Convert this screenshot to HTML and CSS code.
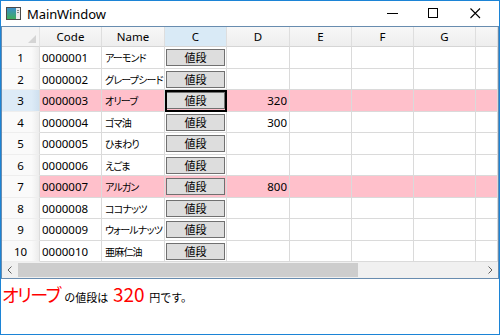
FILE: index.html
```html
<!DOCTYPE html>
<html lang="ja">
<head>
    <meta charset="UTF-8">
    <title>MainWindow</title>
    <link rel="stylesheet" href="styles.css">
</head>
<body>
    <div class="window">
        <div class="titlebar">
            <svg class="app-icon" width="15" height="13" viewBox="0 0 15 13">
                <defs>
                    <linearGradient id="ig" x1="0" y1="0" x2="0" y2="1">
                        <stop offset="0" stop-color="#3b8fc9"/>
                        <stop offset="1" stop-color="#3fae5c"/>
                    </linearGradient>
                </defs>
                <rect x="0" y="0" width="15" height="13" fill="#4a4a4a"/>
                <rect x="1" y="1" width="9" height="11" fill="url(#ig)"/>
                <rect x="10" y="1" width="4" height="11" fill="#ececec"/>
                <rect x="11" y="3" width="2" height="1" fill="#8a8a8a"/>
                <rect x="11" y="5" width="2" height="1" fill="#8a8a8a"/>
            </svg>
            <span class="title">MainWindow</span>
            <div class="controls">
                <svg class="ctl" width="46" height="25" viewBox="0 0 46 25"><rect x="18" y="12" width="11" height="1" fill="#000"/></svg>
                <svg class="ctl" width="38" height="25" viewBox="0 0 38 25"><rect x="13.5" y="7.5" width="9" height="9" fill="none" stroke="#000"/></svg>
                <svg class="ctl" width="46" height="25" viewBox="0 0 46 25"><path d="M17.5 7.5 L27 17 M27 7.5 L17.5 17" stroke="#000" stroke-width="1.1"/></svg>
            </div>
        </div>

        <div class="datagrid">
            <div class="row header">
                <div class="corner"><span class="corner-tri"></span></div>
                <div class="col-head">Code</div>
                <div class="col-head">Name</div>
                <div class="col-head current">C</div>
                <div class="col-head">D</div>
                <div class="col-head">E</div>
                <div class="col-head">F</div>
                <div class="col-head">G</div>
                <div class="col-head filler"></div>
            </div>

            <div class="row tall">
                <div class="row-head">1</div>
                <div class="cell">0000001</div>
                <div class="cell jp">アーモンド</div>
                <div class="cell btn-cell"><button>値段</button></div>
                <div class="cell num"></div>
                <div class="cell"></div><div class="cell"></div><div class="cell"></div><div class="cell"></div>
            </div>
            <div class="row">
                <div class="row-head">2</div>
                <div class="cell">0000002</div>
                <div class="cell jp">グレープシード</div>
                <div class="cell btn-cell"><button>値段</button></div>
                <div class="cell num"></div>
                <div class="cell"></div><div class="cell"></div><div class="cell"></div><div class="cell"></div>
            </div>
            <div class="row tall pink">
                <div class="row-head current">3</div>
                <div class="cell">0000003</div>
                <div class="cell jp">オリーブ</div>
                <div class="cell btn-cell focused"><button>値段</button></div>
                <div class="cell num">320</div>
                <div class="cell"></div><div class="cell"></div><div class="cell"></div><div class="cell"></div>
            </div>
            <div class="row">
                <div class="row-head">4</div>
                <div class="cell">0000004</div>
                <div class="cell jp">ゴマ油</div>
                <div class="cell btn-cell"><button>値段</button></div>
                <div class="cell num">300</div>
                <div class="cell"></div><div class="cell"></div><div class="cell"></div><div class="cell"></div>
            </div>
            <div class="row tall">
                <div class="row-head">5</div>
                <div class="cell">0000005</div>
                <div class="cell jp">ひまわり</div>
                <div class="cell btn-cell"><button>値段</button></div>
                <div class="cell num"></div>
                <div class="cell"></div><div class="cell"></div><div class="cell"></div><div class="cell"></div>
            </div>
            <div class="row">
                <div class="row-head">6</div>
                <div class="cell">0000006</div>
                <div class="cell jp">えごま</div>
                <div class="cell btn-cell"><button>値段</button></div>
                <div class="cell num"></div>
                <div class="cell"></div><div class="cell"></div><div class="cell"></div><div class="cell"></div>
            </div>
            <div class="row tall pink">
                <div class="row-head">7</div>
                <div class="cell">0000007</div>
                <div class="cell jp">アルガン</div>
                <div class="cell btn-cell"><button>値段</button></div>
                <div class="cell num">800</div>
                <div class="cell"></div><div class="cell"></div><div class="cell"></div><div class="cell"></div>
            </div>
            <div class="row">
                <div class="row-head">8</div>
                <div class="cell">0000008</div>
                <div class="cell jp">ココナッツ</div>
                <div class="cell btn-cell"><button>値段</button></div>
                <div class="cell num"></div>
                <div class="cell"></div><div class="cell"></div><div class="cell"></div><div class="cell"></div>
            </div>
            <div class="row tall">
                <div class="row-head">9</div>
                <div class="cell">0000009</div>
                <div class="cell jp">ウォールナッツ</div>
                <div class="cell btn-cell"><button>値段</button></div>
                <div class="cell num"></div>
                <div class="cell"></div><div class="cell"></div><div class="cell"></div><div class="cell"></div>
            </div>
            <div class="row">
                <div class="row-head">10</div>
                <div class="cell">0000010</div>
                <div class="cell jp">亜麻仁油</div>
                <div class="cell btn-cell"><button>値段</button></div>
                <div class="cell num"></div>
                <div class="cell"></div><div class="cell"></div><div class="cell"></div><div class="cell"></div>
            </div>

            <!-- horizontal scrollbar -->
            <div class="hscroll">
                <div class="arrow">
                    <svg width="6" height="8" viewBox="0 0 6 8"><path d="M4.5 0.5 L1 4 L4.5 7.5" fill="none" stroke="#606060"/></svg>
                </div>
                <div class="track"><div class="thumb"></div></div>
                <div class="arrow">
                    <svg width="6" height="8" viewBox="0 0 6 8"><path d="M1.5 0.5 L5 4 L1.5 7.5" fill="none" stroke="#606060"/></svg>
                </div>
            </div>
        </div>

        <div class="result">
            <span class="big kana">オリーブ</span>
            <span class="small">の値段は</span>
            <span class="big">320</span>
            <span class="small">円です。</span>
        </div>
    </div>
</body>
</html>
```

FILE: styles.css
```css
* {
    margin: 0;
    padding: 0;
    box-sizing: border-box;
}

body {
    font-family: "Noto Sans", "Noto Sans CJK JP", sans-serif;
    background: #ffffff;
    color: #000;
}

.window {
    width: 500px;
    height: 335px;
    border: 1px solid #1c84d6;
    display: flex;
    flex-direction: column;
    background: #fff;
}

.titlebar {
    height: 25px;
    display: flex;
    align-items: center;
    flex-shrink: 0;
}

.app-icon {
    margin-left: 5px;
}

.title {
    margin-left: 6px;
    font-size: 13px;
    letter-spacing: -0.1px;
}

.controls {
    margin-left: auto;
    display: flex;
}

.ctl {
    display: block;
}

.datagrid {
    border: 1px solid #688caf;
    flex-shrink: 0;
}

.row {
    display: grid;
    grid-template-columns: 38px 62px 63px 62px 63px 62px 62px 62px 1fr;
    height: 21px;
}

.row.tall {
    height: 22px;
}

.row.header {
    height: 20px;
}

.corner {
    position: relative;
    background: #f4f4f4;
    border-right: 1px solid #e3e3e3;
    border-bottom: 1px solid #d5d5d5;
}

.corner-tri {
    position: absolute;
    right: 3px;
    bottom: 3px;
    width: 0;
    height: 0;
    border-left: 8px solid transparent;
    border-bottom: 8px solid #d4d4d4;
}

.col-head {
    background: linear-gradient(#f7f7f7, #eeeeee);
    border-right: 1px solid #dedede;
    border-bottom: 1px solid #d5d5d5;
    font-size: 11.5px;
    display: flex;
    align-items: center;
    justify-content: center;
}

.col-head.current {
    background: #d9eaf6;
}

.row-head {
    background: linear-gradient(90deg, #fafafa 80%, #ececec);
    border-right: 1px solid #dcdcdc;
    border-bottom: 1px solid #eeeeee;
    font-size: 11.5px;
    display: flex;
    align-items: center;
    justify-content: center;
}

.row-head.current {
    background: linear-gradient(90deg, #ddebf7 80%, #cfe0ef);
}

.cell {
    border-right: 1px solid #dadada;
    border-bottom: 1px solid #dadada;
    font-size: 11.5px;
    padding-left: 2px;
    display: flex;
    align-items: center;
    overflow: hidden;
    white-space: nowrap;
}

.cell.jp {
    font-size: 10px;
    font-feature-settings: "palt";
    letter-spacing: -0.8px;
    padding-left: 3px;
}

.cell.num {
    justify-content: flex-end;
    padding-right: 2px;
}

.row.pink .cell {
    background: #ffc0cb;
}

.btn-cell {
    padding: 0 1px;
    justify-content: center;
}

.btn-cell.focused {
    outline: 2px solid #000;
    outline-offset: -2px;
}

button {
    width: 60px;
    height: 17px;
    background: #dddddd;
    border: 1px solid #707070;
    font-family: "Noto Sans CJK JP", sans-serif;
    font-size: 11px;
    color: #000;
    line-height: 15px;
}

.hscroll {
    height: 16px;
    display: flex;
    background: #f0f0f0;
}

.arrow {
    width: 16px;
    display: flex;
    align-items: center;
    justify-content: center;
}

.track {
    flex: 1;
    padding: 1px 0;
}

.thumb {
    width: 340px;
    height: 100%;
    background: #cdcdcd;
}

.result {
    flex: 1;
    padding: 2px 0 0 1px;
    font-family: "Noto Sans CJK JP", sans-serif;
    line-height: 26px;
}

.big {
    color: #ff0000;
    font-size: 19px;
}

.big.kana {
    font-size: 18px;
    font-feature-settings: "palt";
    letter-spacing: -1.5px;
}

.small {
    font-size: 11px;
    margin: 0 1px;
}
```
